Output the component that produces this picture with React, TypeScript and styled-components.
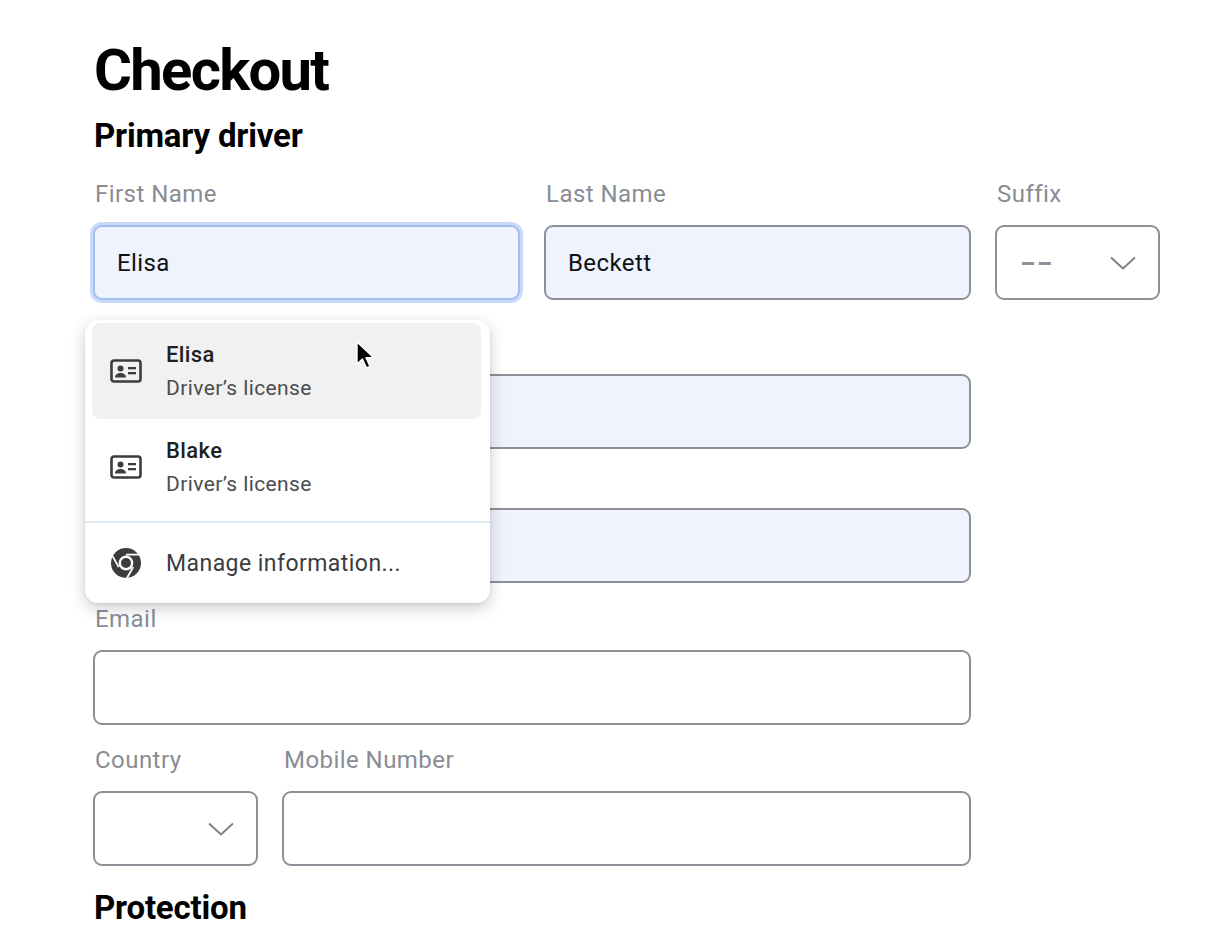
import React from 'react'
import styled, { createGlobalStyle } from 'styled-components'

const GlobalStyle = createGlobalStyle`
  html, body {
    margin: 0;
    padding: 0;
    background: #fff;
  }
  body {
    font-family: Roboto, "Liberation Sans", Arial, sans-serif;
    color: #000;
  }
`

const Page = styled.main`
  padding: 38px 0 0 93px;
  width: 1100px;
`

const Title = styled.h1`
  margin: 0;
  font-size: 58px;
  line-height: 64px;
  font-weight: 700;
  letter-spacing: -1.7px;
  padding-left: 1px;
`

const SectionTitle = styled.h2<{ $mt?: number }>`
  margin: ${(p) => p.$mt ?? 0}px 0 0;
  font-size: 33px;
  line-height: 40px;
  font-weight: 700;
  letter-spacing: -0.2px;
  padding-left: 1px;
`

const Form = styled.div`
  display: flex;
  flex-direction: column;
  margin-top: 24px;
`

const Row = styled.div<{ $cols: string; $mt?: number }>`
  display: grid;
  grid-template-columns: ${(p) => p.$cols};
  column-gap: 24px;
  margin-top: ${(p) => p.$mt ?? 21}px;
`

const Field = styled.div`
  position: relative;
  display: flex;
  flex-direction: column;
`

const Label = styled.label`
  font-size: 24px;
  line-height: 28px;
  height: 28px;
  letter-spacing: 0.45px;
  color: #898c95;
  margin-bottom: 17px;
  padding-left: 2px;
`

const Input = styled.div<{ $filled?: boolean; $focused?: boolean }>`
  box-sizing: border-box;
  height: 75px;
  border-radius: 9px;
  border: 2px solid ${(p) => (p.$focused ? '#a2bef1' : '#8e9099')};
  background: ${(p) => (p.$filled ? '#eff3fe' : '#fff')};
  box-shadow: ${(p) => (p.$focused ? '0 0 0 3px #c9daf9' : 'none')};
  display: flex;
  align-items: center;
  padding: 0 22px;
  font-size: 24px;
  letter-spacing: 0.4px;
  color: #111;
`

const Select = styled(Input)`
  justify-content: space-between;
  padding: 0 22px;
`

const Placeholder = styled.span`
  display: inline-block;
  color: #8f9197;
  font-weight: 900;
  letter-spacing: -1px;
  transform: scaleX(1.7);
  transform-origin: left center;
`

const Popup = styled.div`
  position: absolute;
  left: -8px;
  top: 140px;
  width: 405px;
  box-sizing: border-box;
  background: #fff;
  border-radius: 13px;
  box-shadow: 0 5px 16px rgba(0, 0, 0, 0.2), 0 1px 3px rgba(0, 0, 0, 0.08);
  padding: 3px 9px 0 7px;
  z-index: 10;
`

const Suggestions = styled.div`
  padding-bottom: 6px;
`

const Suggestion = styled.div<{ $active?: boolean }>`
  display: flex;
  align-items: center;
  height: 96px;
  border-radius: 8px;
  background: ${(p) => (p.$active ? '#f1f1f1' : 'transparent')};
  padding-left: 18px;
`

const IconBox = styled.span`
  width: 32px;
  display: flex;
  justify-content: center;
  flex: none;
  margin-right: 24px;
`

const Texts = styled.div`
  display: flex;
  flex-direction: column;
`

const Name = styled.span`
  font-size: 22px;
  line-height: 30px;
  font-weight: 500;
  letter-spacing: 0.4px;
  color: #1f1f1f;
`

const Sub = styled.span`
  font-size: 21px;
  line-height: 30px;
  margin-top: 3px;
  letter-spacing: 0.4px;
  color: #4a4c50;
`

const Divider = styled.hr`
  border: none;
  border-top: 2px solid #e0eaf2;
  margin: 0 -9px 0 -7px;
`

const Manage = styled.div`
  display: flex;
  align-items: center;
  height: 80px;
  padding-left: 18px;
  font-size: 23px;
  letter-spacing: 0.45px;
  color: #3c3d40;
`

const Cursor = styled.svg`
  position: absolute;
  left: 271px;
  top: 21px;
`

const IdCard = () => (
  <svg width="32" height="24" viewBox="0 0 32 24">
    <rect x="1.5" y="1.5" width="29" height="21" rx="2.5" fill="none" stroke="#3c3c3c" strokeWidth="2.6" />
    <circle cx="10.5" cy="9.5" r="3" fill="#3c3c3c" />
    <path d="M5 18.5c0-3 2.6-4.6 5.5-4.6s5.5 1.6 5.5 4.6z" fill="#3c3c3c" />
    <rect x="18" y="8" width="8" height="2.3" fill="#3c3c3c" />
    <rect x="18" y="13" width="8" height="2.3" fill="#3c3c3c" />
  </svg>
)

const ChromeIcon = () => (
  <svg width="32" height="32" viewBox="0 0 32 32">
    <circle cx="16" cy="16" r="15" fill="#3c3c3c" />
    <circle cx="16" cy="16" r="7.4" fill="#fff" />
    <circle cx="16" cy="16" r="5" fill="#3c3c3c" />
    <path d="M16 8.6 H30 L29 6.8 H16Z" fill="#fff" />
    <path d="M22.4 19.7 L15.4 31.8 L17.5 31.9 L24 20.6Z" fill="#fff" />
    <path d="M9.6 19.7 L2.6 7.6 L1.8 9.5 L8 20.6Z" fill="#fff" />
  </svg>
)

const Chevron = () => (
  <svg width="26" height="14" viewBox="0 0 26 14">
    <path d="M1 1.5 L13 12.5 L25 1.5" fill="none" stroke="#7b7d84" strokeWidth="1.8" />
  </svg>
)

export default function App() {
  return (
    <>
      <GlobalStyle />
      <Page>
        <Title>Checkout</Title>
        <SectionTitle $mt={14}>Primary driver</SectionTitle>
        <Form>
          <Row $cols="427px 427px 165px" $mt={0}>
            <Field>
              <Label>First Name</Label>
              <Input $filled $focused>
                Elisa
              </Input>
              <Popup>
                <Suggestions>
                  <Suggestion $active>
                    <IconBox>
                      <IdCard />
                    </IconBox>
                    <Texts>
                      <Name>Elisa</Name>
                      <Sub>Driver’s license</Sub>
                    </Texts>
                  </Suggestion>
                  <Suggestion>
                    <IconBox>
                      <IdCard />
                    </IconBox>
                    <Texts>
                      <Name>Blake</Name>
                      <Sub>Driver’s license</Sub>
                    </Texts>
                  </Suggestion>
                </Suggestions>
                <Divider />
                <Manage>
                  <IconBox>
                    <ChromeIcon />
                  </IconBox>
                  Manage information...
                </Manage>
                <Cursor width="20" height="30" viewBox="0 0 20 30">
                  <path
                    d="M1 1 L1 23 L6.5 18 L10.5 27 L14 25.4 L10 16.6 L17.5 16.6 Z"
                    fill="#000"
                    stroke="#fff"
                    strokeWidth="1.4"
                    strokeLinejoin="round"
                  />
                </Cursor>
              </Popup>
            </Field>
            <Field>
              <Label>Last Name</Label>
              <Input $filled>Beckett</Input>
            </Field>
            <Field>
              <Label>Suffix</Label>
              <Select>
                <Placeholder>--</Placeholder>
                <Chevron />
              </Select>
            </Field>
          </Row>
          <Row $cols="878px" $mt={29}>
            <Field>
              <Label />
              <Input $filled />
            </Field>
          </Row>
          <Row $cols="878px" $mt={14}>
            <Field>
              <Label />
              <Input $filled />
            </Field>
          </Row>
          <Row $cols="878px" $mt={22}>
            <Field>
              <Label>Email</Label>
              <Input />
            </Field>
          </Row>
          <Row $cols="165px 689px" $mt={21}>
            <Field>
              <Label>Country</Label>
              <Select>
                <span />
                <Chevron />
              </Select>
            </Field>
            <Field>
              <Label>Mobile Number</Label>
              <Input />
            </Field>
          </Row>
        </Form>
        <SectionTitle $mt={22}>Protection</SectionTitle>
      </Page>
    </>
  )
}
